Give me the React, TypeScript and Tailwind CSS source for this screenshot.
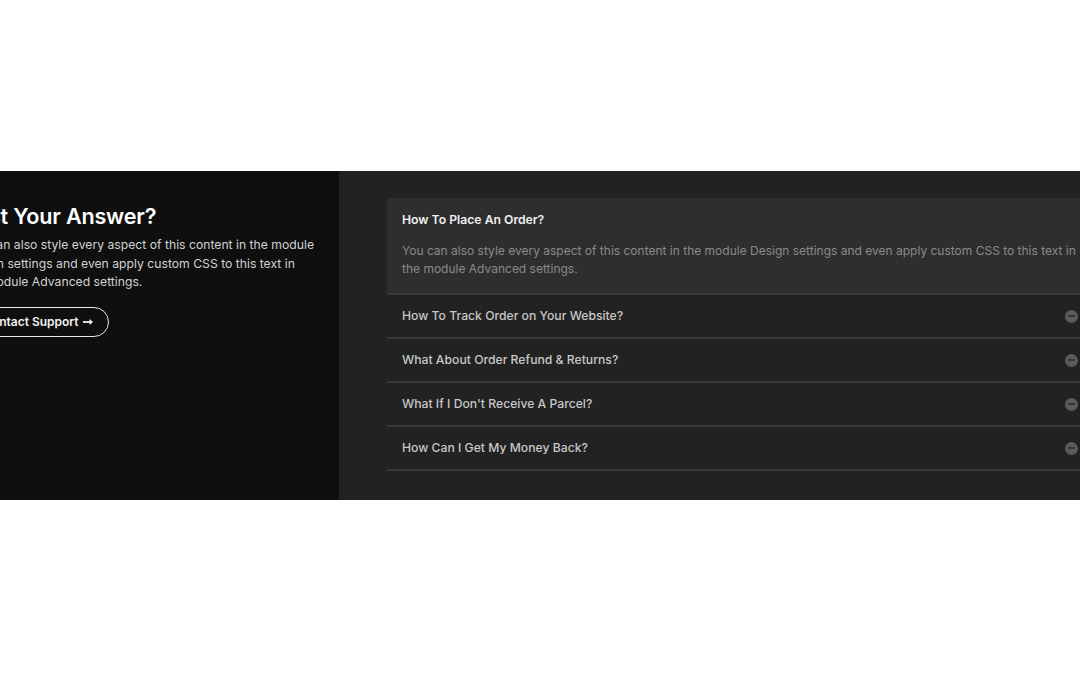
import React from "react";

const faqs = [
  "How To Track Order on Your Website?",
  "What About Order Refund & Returns?",
  "What If I Don't Receive A Parcel?",
  "How Can I Get My Money Back?",
];

const body =
  "You can also style every aspect of this content in the module Design settings and even apply custom CSS to this text in the module Advanced settings.";

function MinusCircle() {
  return (
    <span className="flex h-[13px] w-[13px] items-center justify-center rounded-full bg-[#5c5c5c]">
      <span className="h-[1.5px] w-[7px] bg-[#363636]" />
    </span>
  );
}

export default function App() {
  return (
    <div
      className="h-[675px] w-[1080px] overflow-hidden bg-white pt-[171px]"
      style={{ fontFamily: "Inter, 'Noto Sans', sans-serif" }}
    >
      <div className="ml-[-60px] flex h-[329px] w-[1200px]">
        {/* left column */}
        <div className="w-[399px] shrink-0 bg-[#0f0f0f] pl-[24px] pt-[31px]">
          <h2 className="text-[21.6px] leading-[28px] font-semibold tracking-[-0.2px] text-white">
            Lost Your Answer?
          </h2>
          <p className="mt-[6px] w-[351px] text-[12.2px] leading-[18.5px] text-[#d2d2d2]">
            {body}
          </p>
          <button className="mt-[15px] flex h-[30px] items-center gap-[4px] rounded-full border-[1.5px] border-[#e8e8e8] pl-[18px] pr-[14px] text-[12px] font-semibold text-[#f2f2f2]">
            Contact Support
            <svg width="11" height="8" viewBox="0 0 11 8" fill="none">
              <path d="M0 4h8.5" stroke="#f2f2f2" strokeWidth="1.8" />
              <path d="M6.5 1l3.5 3-3.5 3z" fill="#f2f2f2" />
            </svg>
          </button>
        </div>

        {/* right column */}
        <div className="w-[801px] shrink-0 bg-[#222222] pl-[48px] pt-[27px]">
          <div className="w-[706px]">
            <div className="border-b-2 border-[#393939] bg-[#2e2e2e] pl-[15px] pr-[15px] pt-[13px] pb-[15px]">
              <div className="text-[12.2px] leading-[18px] font-semibold text-[#f0f0f0]">
                How To Place An Order?
              </div>
              <p className="mt-[13px] w-[680px] text-[12px] leading-[18px] text-[#8a8a8a]">
                {body}
              </p>
            </div>
            {faqs.map((q) => (
              <div
                key={q}
                className="flex h-[44px] items-center justify-between border-b-2 border-[#393939] pl-[15px] pr-[15px]"
              >
                <span className="text-[12.2px] font-medium text-[#c8c8c8]">{q}</span>
                <MinusCircle />
              </div>
            ))}
          </div>
        </div>
      </div>
    </div>
  );
}
